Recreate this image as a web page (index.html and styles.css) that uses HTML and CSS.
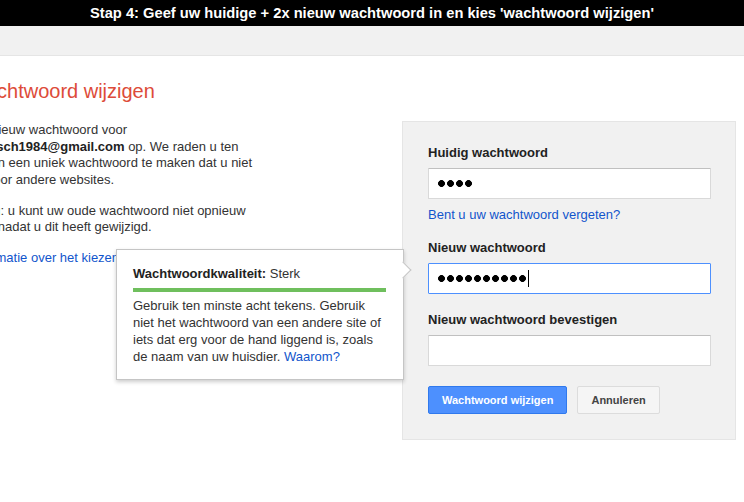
FILE: index.html
```html
<!DOCTYPE html>
<html lang="nl">
<head>
<meta charset="utf-8">
<title>Wachtwoord wijzigen</title>
<link rel="stylesheet" href="styles.css">
</head>
<body>
<div class="banner">Stap 4: Geef uw huidige + 2x nieuw wachtwoord in en kies 'wachtwoord wijzigen'</div>
<div class="topbar"></div>
<main class="content">
  <h1 class="title">Uw wachtwoord wijzigen</h1>
  <div class="row">
    <div class="intro">
      <p>Kies een nieuw wachtwoord voor <b>martijnbosch1984@gmail.com</b> op. We raden u ten zeerste aan een uniek wachtwoord te maken dat u niet gebruikt voor andere websites.</p>
      <p>Opmerking: u kunt uw oude wachtwoord niet opnieuw gebruiken nadat u dit heeft gewijzigd.</p>
      <p class="more"><a href="#" class="link">Meer informatie over het kiezen van een slim wachtwoord</a></p>
    </div>
    <form class="panel">
      <div class="label">Huidig wachtwoord</div>
      <div class="field" aria-label="Huidig wachtwoord"><span class="dots dots-4"></span></div>
      <a href="#" class="link forgot">Bent u uw wachtwoord vergeten?</a>
      <div class="label label-gap">Nieuw wachtwoord</div>
      <div class="field field-focus" aria-label="Nieuw wachtwoord"><span class="dots dots-10"></span><span class="caret"></span></div>
      <div class="label label-gap2">Nieuw wachtwoord bevestigen</div>
      <div class="field" aria-label="Nieuw wachtwoord bevestigen"></div>
      <div class="actions">
        <button type="button" class="btn btn-primary">Wachtwoord wijzigen</button>
        <button type="button" class="btn btn-secondary">Annuleren</button>
      </div>
    </form>
  </div>
  <div class="tooltip">
    <div class="tip-title"><b>Wachtwoordkwaliteit:</b> Sterk</div>
    <div class="meter"></div>
    <div class="tip-body">Gebruik ten minste acht tekens. Gebruik niet het wachtwoord van een andere site of iets dat erg voor de hand liggend is, zoals de naam van uw huisdier. <a href="#" class="link">Waarom?</a></div>
  </div>
</main>
</body>
</html>
```

FILE: styles.css
```css
* { box-sizing: border-box; }
html, body { margin: 0; padding: 0; }
body {
  width: 744px;
  height: 502px;
  overflow: hidden;
  background: #fff;
  font-family: "Liberation Sans", Arial, sans-serif;
  font-size: 13px;
  color: #333;
}
.banner {
  height: 26px;
  background: #000;
  color: #fff;
  font-weight: bold;
  font-size: 14.7px;
  line-height: 26px;
  text-align: center;
  white-space: nowrap;
  overflow: hidden;
}
.topbar {
  height: 30px;
  background: #f1f1f1;
  border-bottom: 1px solid #e5e5e5;
}
.content {
  position: relative;
  margin-left: -63px;
  padding-top: 23px;
}
.title {
  margin: 0 0 18px;
  font-size: 20px;
  line-height: 24px;
  font-weight: normal;
  color: #dd4b39;
}
.row {
  display: flex;
  align-items: flex-start;
}
.intro {
  width: 333px;
  flex: none;
  padding-top: 1px;
}
.intro p {
  margin: 0 0 14px;
  line-height: 16.67px;
}
.intro .more { white-space: nowrap; }
.intro b { color: #222; }
.link { color: #15c; text-decoration: none; }
.panel {
  margin: 0 0 0 132px;
  width: 334px;
  flex: none;
  background: #f1f1f1;
  border: 1px solid #e5e5e5;
  padding: 23px 25px 25px;
  display: flex;
  flex-direction: column;
  align-items: flex-start;
}
.label {
  font-weight: bold;
  color: #222;
  line-height: 16px;
  margin-bottom: 7px;
}
.label-gap { margin-top: 17px; }
.label-gap2 { margin-top: 18px; }
.field {
  width: 283px;
  height: 31px;
  background: #fff;
  border: 1px solid #d9d9d9;
  border-top-color: #c0c0c0;
  border-radius: 1px;
  display: flex;
  align-items: center;
  padding-left: 9px;
}
.field-focus { border-color: #4d90fe; }
.dots {
  display: inline-block;
  height: 7px;
  background: radial-gradient(circle at 3.5px 3.5px, #000 3.1px, rgba(0,0,0,0) 3.7px) 0 0 / 9px 7px repeat-x;
}
.dots-4 { width: 34px; }
.dots-10 { width: 88px; }
.caret {
  display: inline-block;
  width: 1px;
  height: 17px;
  background: #000;
  margin-left: 2px;
}
.forgot {
  margin-top: 8px;
  line-height: 16px;
}
.actions {
  display: flex;
  gap: 10px;
  margin-top: 20px;
}
.btn {
  height: 28px;
  padding: 0 13px;
  font-family: "Liberation Sans", Arial, sans-serif;
  font-size: 11px;
  font-weight: bold;
  border-radius: 2px;
  border: 1px solid;
  cursor: pointer;
}
.btn-primary {
  background: #4d90fe;
  border-color: #3079ed;
  color: #fff;
}
.btn-secondary {
  background: #f5f5f5;
  border-color: #dcdcdc;
  color: #444;
}
.tooltip {
  position: absolute;
  left: 179px;
  top: 193px;
  width: 288px;
  background: #fff;
  border: 1px solid #c5c5c5;
  box-shadow: 0 2px 4px rgba(0,0,0,0.2);
  padding: 16px 17px 14px 16px;
  color: #333;
}
.tooltip::after {
  content: "";
  position: absolute;
  right: -6px;
  top: 14px;
  width: 11px;
  height: 11px;
  background: #fff;
  border-top: 1px solid #c5c5c5;
  border-right: 1px solid #c5c5c5;
  transform: rotate(45deg);
}
.tip-title {
  line-height: 16px;
  color: #333;
}
.tip-title b { color: #222; }
.meter {
  height: 4px;
  margin-top: 6px;
  background: #6fbf5d;
}
.tip-body {
  margin-top: 5px;
  line-height: 17px;
}
```
